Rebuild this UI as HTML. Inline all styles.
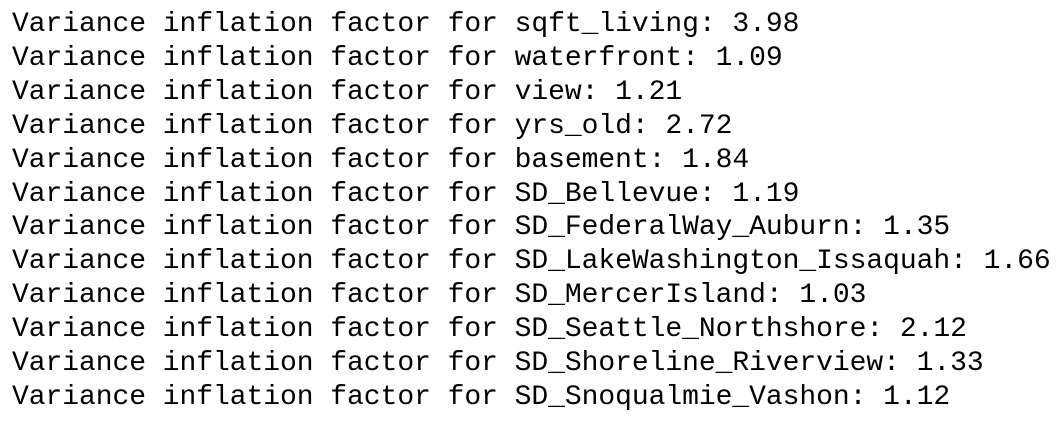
<!DOCTYPE html>
<html><head><style>
body{margin:0;background:#fff;width:1060px;height:424px;overflow:hidden}
pre{margin:0;position:absolute;left:12px;top:8px;font-family:"Liberation Mono",monospace;font-size:28px;line-height:33.9px;color:#000;letter-spacing:-0.05px}
</style></head><body><pre>Variance inflation factor for sqft_living: 3.98
Variance inflation factor for waterfront: 1.09
Variance inflation factor for view: 1.21
Variance inflation factor for yrs_old: 2.72
Variance inflation factor for basement: 1.84
Variance inflation factor for SD_Bellevue: 1.19
Variance inflation factor for SD_FederalWay_Auburn: 1.35
Variance inflation factor for SD_LakeWashington_Issaquah: 1.66
Variance inflation factor for SD_MercerIsland: 1.03
Variance inflation factor for SD_Seattle_Northshore: 2.12
Variance inflation factor for SD_Shoreline_Riverview: 1.33
Variance inflation factor for SD_Snoqualmie_Vashon: 1.12</pre></body></html>
